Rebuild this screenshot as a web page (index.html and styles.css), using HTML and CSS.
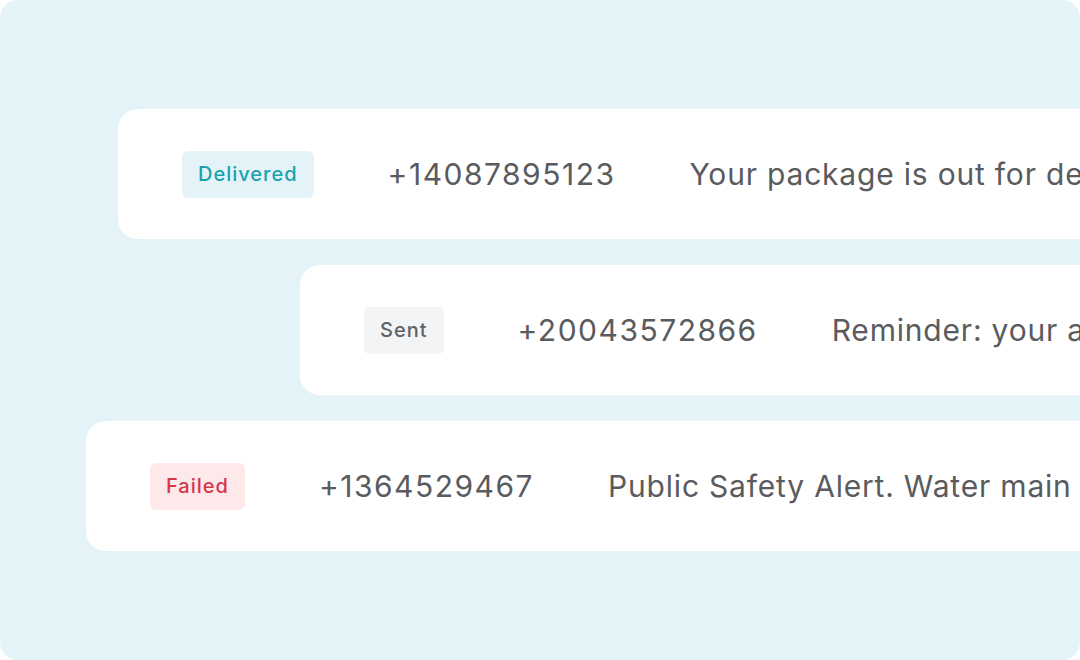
FILE: index.html
```html
<!DOCTYPE html>
<html>
<head>
<meta charset="utf-8">
<link rel="stylesheet" href="styles.css">
</head>
<body>
<div class="panel">
  <div class="row row-1">
    <span class="badge badge-delivered">Delivered</span>
    <span class="phone">+14087895123</span>
    <span class="msg">Your package is out for delivery</span>
  </div>
  <div class="row row-2">
    <span class="badge badge-sent">Sent</span>
    <span class="phone">+20043572866</span>
    <span class="msg">Reminder: your appointment</span>
  </div>
  <div class="row row-3">
    <span class="badge badge-failed">Failed</span>
    <span class="phone">+1364529467</span>
    <span class="msg">Public Safety Alert. Water main break</span>
  </div>
</div>
</body>
</html>
```
FILE: styles.css
```css
html, body {
  margin: 0;
  padding: 0;
  background: #ffffff;
}
body {
  width: 1080px;
  height: 660px;
  overflow: hidden;
  font-family: Inter, "Liberation Sans", sans-serif;
}
.panel {
  width: 1080px;
  height: 660px;
  box-sizing: border-box;
  background: #e4f3f8;
  border-radius: 18px;
  overflow: hidden;
  padding-top: 109px;
  display: flex;
  flex-direction: column;
  gap: 26px;
}
.row {
  height: 130px;
  box-sizing: border-box;
  background: #ffffff;
  border-radius: 20px;
  display: flex;
  align-items: center;
  gap: 74px;
  padding-left: 64px;
  white-space: nowrap;
  width: 1400px;
  flex-shrink: 0;
}
.row-1 { margin-left: 118px; }
.row-2 { margin-left: 300px; }
.row-3 { margin-left: 86px; }
.badge {
  display: inline-flex;
  align-items: center;
  height: 47px;
  box-sizing: border-box;
  padding: 0 16px;
  border-radius: 6px;
  font-size: 20px;
  letter-spacing: 1px;
  font-weight: 450;
}
.badge-delivered { background: #e4f3f8; color: #1aa2ae; }
.badge-sent { background: #f3f4f5; color: #5f6266; }
.badge-failed { background: #fde8ea; color: #d4364a; }
.phone, .msg {
  font-size: 30px;
  color: #5a5b5e;
  font-weight: 400;
}
.phone {
  letter-spacing: 1.5px;
}
.msg {
  letter-spacing: 0.8px;
}
```
